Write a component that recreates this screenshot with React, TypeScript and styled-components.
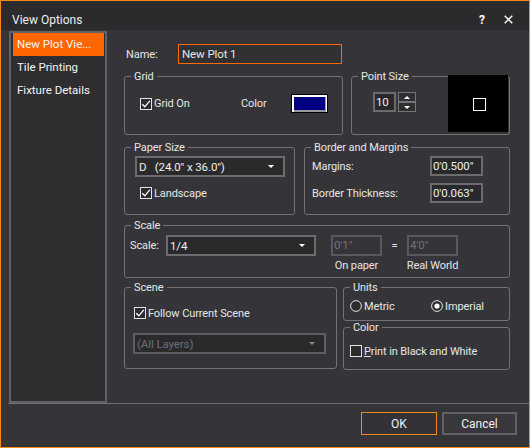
import React from 'react';
import styled, { createGlobalStyle } from 'styled-components';

const FONT = 'Roboto, "Liberation Sans", Arial, sans-serif';

const GlobalStyle = createGlobalStyle`
  html, body {
    margin: 0;
    padding: 0;
    background: #353539;
  }
  body {
    font-family: ${FONT};
    font-size: 11px;
    letter-spacing: -0.1px;
    color: #e6e6e6;
  }
  * {
    box-sizing: border-box;
  }
`;

const Dialog = styled.div`
  width: 530px;
  height: 448px;
  border: 1px solid #f7861c;
  background: #353539;
  display: flex;
  flex-direction: column;
`;

const TitleBar = styled.div`
  height: 29px;
  flex: none;
  background: #2b2b2e;
  display: flex;
  align-items: center;
  padding: 8px 16px 0 11px;
  font-size: 12px;
  letter-spacing: 0;
  color: #eeeeee;
`;

const TitleText = styled.div`
  flex: 1;
`;

const TitleButtons = styled.div`
  display: flex;
  align-items: center;
  gap: 19px;
`;

const HelpMark = styled.span`
  font-weight: bold;
  font-size: 12px;
  color: #ffffff;
`;

const Main = styled.div`
  height: 373px;
  flex: none;
  display: flex;
`;

const Sidebar = styled.div`
  width: 98px;
  height: 372px;
  margin: 1px 0 0 8px;
  flex: none;
  border: 2px solid #626265;
  background: #2e2e31;
  padding: 0 1px 0 2px;
`;

const NavItem = styled.div<{ $active?: boolean }>`
  height: 23px;
  line-height: 22px;
  padding-left: 4px;
  font-size: 11.5px;
  letter-spacing: 0;
  color: #f4f4f4;
  background: ${(p) => (p.$active ? '#ff6600' : 'transparent')};
  white-space: nowrap;
`;

const Content = styled.div`
  flex: 1;
  padding: 14px 0 0 17px;
  display: flex;
  flex-direction: column;
`;

const NameRow = styled.div`
  display: flex;
  align-items: center;
  height: 20px;
  padding-left: 2px;
`;

const NameLabel = styled.span`
  width: 52px;
`;

const NameInput = styled.div`
  width: 164px;
  height: 20px;
  border: 1px solid #ff6a00;
  background: #313134;
  padding-left: 3px;
  line-height: 18px;
  font-size: 11.5px;
`;

const Row = styled.div<{ $mt: number; $gap: number }>`
  display: flex;
  align-items: flex-start;
  margin-top: ${(p) => p.$mt}px;
  gap: ${(p) => p.$gap}px;
`;

const Stack = styled.div<{ $gap: number }>`
  display: flex;
  flex-direction: column;
  gap: ${(p) => p.$gap}px;
`;

const Group = styled.div<{ $w: number; $h: number; $pad: string; $dir?: string }>`
  position: relative;
  flex: none;
  width: ${(p) => p.$w}px;
  height: ${(p) => p.$h}px;
  border: 1px solid #737376;
  border-radius: 3px;
  padding: ${(p) => p.$pad};
  display: flex;
  flex-direction: ${(p) => p.$dir || 'column'};
  align-items: flex-start;
`;

const Legend = styled.span`
  position: absolute;
  top: -7px;
  left: 6px;
  padding: 0 3px;
  line-height: 13px;
  background: #353539;
  color: #e6e6e6;
  white-space: nowrap;
`;

const FlexLine = styled.div<{ $h: number }>`
  display: flex;
  align-items: center;
  height: ${(p) => p.$h}px;
`;

const FixedLabel = styled.span<{ $w: number; $lh?: number }>`
  width: ${(p) => p.$w}px;
  flex: none;
  white-space: nowrap;
  line-height: ${(p) => (p.$lh ? `${p.$lh}px` : 'normal')};
`;

const CheckRow = styled.label<{ $w?: number; $ml?: number; $mt?: number }>`
  display: flex;
  align-items: center;
  gap: 2px;
  height: 14px;
  flex: none;
  width: ${(p) => (p.$w ? `${p.$w}px` : 'auto')};
  margin-left: ${(p) => p.$ml || 0}px;
  margin-top: ${(p) => p.$mt || 0}px;
  white-space: nowrap;
`;

const CheckBox = styled.span`
  width: 12px;
  height: 12px;
  border: 1px solid #e4e4e4;
  background: #2c2c2f;
  display: flex;
  align-items: center;
  justify-content: center;
`;

const RadioDot = styled.span`
  width: 12px;
  height: 12px;
  display: flex;
`;

const Swatch = styled.div`
  width: 37px;
  height: 19px;
  border: 1px solid #000;
  background: #ffffff;
  padding: 2px 1px 0 2px;
`;

const SwatchFill = styled.div`
  width: 100%;
  height: 100%;
  background: #000080;
  border-bottom: 2px solid #9b9b9b;
  border-right: 1px solid #9b9b9b;
`;

const SpinWrap = styled.div`
  display: flex;
  gap: 2px;
  margin: 15px 0 0 21px;
`;

const TextBox = styled.div<{ $w: number; $h: number; $disabled?: boolean }>`
  width: ${(p) => p.$w}px;
  height: ${(p) => p.$h}px;
  flex: none;
  border: 2px solid ${(p) => (p.$disabled ? '#59595c' : '#6c6c6f')};
  background: ${(p) => (p.$disabled ? '#353539' : '#29292b')};
  color: ${(p) => (p.$disabled ? '#737376' : '#eeeeee')};
  padding-left: 1px;
  line-height: ${(p) => p.$h - 4}px;
  font-size: 11.5px;
  white-space: nowrap;
  overflow: hidden;
`;

const SpinButtons = styled.div`
  width: 18px;
  height: 20px;
  display: flex;
  flex-direction: column;
`;

const SpinHalf = styled.div`
  flex: 1;
  border: 1px solid #76767a;
  background: #2f2f32;
  display: flex;
  align-items: center;
  justify-content: center;
`;

const Triangle = styled.span<{ $up?: boolean }>`
  width: 0;
  height: 0;
  border-left: 3px solid transparent;
  border-right: 3px solid transparent;
  ${(p) => (p.$up ? 'border-bottom: 3px solid #ffffff;' : 'border-top: 3px solid #ffffff;')}
`;

const Preview = styled.div`
  width: 60px;
  height: 57px;
  margin: -2px 1px 0 auto;
  background: #000000;
  display: flex;
  align-items: center;
  justify-content: center;
`;

const PreviewDot = styled.div`
  width: 13px;
  height: 13px;
  border: 1px solid #ffffff;
  margin: 2px 0 0 3px;
`;

const Select = styled.div<{ $w: number; $disabled?: boolean; $ml?: number; $mt?: number }>`
  width: ${(p) => p.$w}px;
  height: 21px;
  flex: none;
  margin-left: ${(p) => p.$ml || 0}px;
  margin-top: ${(p) => p.$mt || 0}px;
  border: 2px solid ${(p) => (p.$disabled ? '#5e5e61' : '#6c6c6f')};
  background: #2a2a2c;
  color: ${(p) => (p.$disabled ? '#6f6f72' : '#eeeeee')};
  display: flex;
  align-items: center;
  justify-content: space-between;
  padding: 0 9px 0 2px;
  font-size: 11.5px;
  white-space: pre;
`;

const Arrow = styled.span<{ $disabled?: boolean }>`
  width: 0;
  height: 0;
  border-left: 3px solid transparent;
  border-right: 3px solid transparent;
  border-top: 3px solid ${(p) => (p.$disabled ? '#8a8a8d' : '#ffffff')};
`;

const ScaleCol = styled.div<{ $ml: number }>`
  display: flex;
  flex-direction: column;
  margin-left: ${(p) => p.$ml}px;
`;

const Caption = styled.div`
  margin-top: 3px;
  line-height: 14px;
  white-space: nowrap;
  width: 51px;
  display: flex;
  justify-content: center;
`;

const Equals = styled.span`
  width: 25px;
  text-align: center;
  line-height: 21px;
`;

const Separator = styled.div`
  height: 1px;
  flex: none;
  margin-left: 7px;
  background: #707073;
`;

const Footer = styled.div`
  flex: 1;
  display: flex;
  justify-content: flex-end;
  gap: 5px;
  padding: 8px 12px 0 0;
`;

const Button = styled.button<{ $primary?: boolean; $w: number }>`
  width: ${(p) => p.$w}px;
  height: 23px;
  border: ${(p) => (p.$primary ? '1px solid #f08a1a' : '2px solid #626265')};
  background: ${(p) => (p.$primary ? '#333337' : '#38383c')};
  color: #eeeeee;
  font-family: ${FONT};
  font-size: 12px;
  padding: 0;
`;

const Check = () => (
  <svg width="10" height="10" viewBox="0 0 10 10">
    <path d="M1.3 5.2 L3.8 7.8 L8.8 1.8" fill="none" stroke="#ffffff" strokeWidth="1.3" />
  </svg>
);

const CheckItem: React.FC<{ checked?: boolean; w?: number; ml?: number; mt?: number; children: React.ReactNode }> = ({
  checked,
  w,
  ml,
  mt,
  children,
}) => (
  <CheckRow $w={w} $ml={ml} $mt={mt}>
    <CheckBox>{checked && <Check />}</CheckBox>
    <span>{children}</span>
  </CheckRow>
);

const RadioItem: React.FC<{ checked?: boolean; w?: number; children: React.ReactNode }> = ({ checked, w, children }) => (
  <CheckRow $w={w}>
    <RadioDot>
      <svg width="12" height="12" viewBox="0 0 12 12">
        <circle cx="6" cy="6" r="5.4" fill="#2c2c2f" stroke="#e4e4e4" strokeWidth="1" />
        {checked && <circle cx="6" cy="6" r="2.6" fill="#ffffff" />}
      </svg>
    </RadioDot>
    <span>{children}</span>
  </CheckRow>
);

export default function App() {
  return (
    <>
      <GlobalStyle />
      <Dialog>
        <TitleBar>
          <TitleText>View Options</TitleText>
          <TitleButtons>
            <HelpMark>?</HelpMark>
            <svg width="9" height="9" viewBox="0 0 9 9">
              <path d="M0.7 0.7 L8.3 8.3 M8.3 0.7 L0.7 8.3" stroke="#ffffff" strokeWidth="1.4" />
            </svg>
          </TitleButtons>
        </TitleBar>

        <Main>
          <Sidebar>
            <NavItem $active>New Plot Vie...</NavItem>
            <NavItem>Tile Printing</NavItem>
            <NavItem>Fixture Details</NavItem>
          </Sidebar>

          <Content>
            <NameRow>
              <NameLabel>Name:</NameLabel>
              <NameInput>New Plot 1</NameInput>
            </NameRow>

            <Row $mt={12} $gap={8}>
              <Group $w={219} $h={59} $pad="17px 0 0 15px">
                <Legend>Grid</Legend>
                <FlexLine $h={19}>
                  <CheckItem checked w={101}>
                    Grid On
                  </CheckItem>
                  <FixedLabel $w={50}>Color</FixedLabel>
                  <Swatch>
                    <SwatchFill />
                  </Swatch>
                </FlexLine>
              </Group>
              <Group $w={159} $h={59} $pad="0" $dir="row">
                <Legend>Point Size</Legend>
                <SpinWrap>
                  <TextBox $w={23} $h={20}>10</TextBox>
                  <SpinButtons>
                    <SpinHalf>
                      <Triangle $up />
                    </SpinHalf>
                    <SpinHalf>
                      <Triangle />
                    </SpinHalf>
                  </SpinButtons>
                </SpinWrap>
                <Preview>
                  <PreviewDot />
                </Preview>
              </Group>
            </Row>

            <Row $mt={12} $gap={9}>
              <Group $w={171} $h={68} $pad="8px 0 0 10px">
                <Legend>Paper Size</Legend>
                <Select $w={150}>
                  <span>D   (24.0" x 36.0")</span>
                  <Arrow />
                </Select>
                <CheckItem checked ml={5} mt={9}>
                  Landscape
                </CheckItem>
              </Group>
              <Group $w={206} $h={68} $pad="8px 0 0 7px">
                <Legend>Border and Margins</Legend>
                <Stack $gap={7}>
                  <FlexLine $h={20}>
                    <FixedLabel $w={118}>Margins:</FixedLabel>
                    <TextBox $w={53} $h={20}>0'0.500"</TextBox>
                  </FlexLine>
                  <FlexLine $h={20}>
                    <FixedLabel $w={118}>Border Thickness:</FixedLabel>
                    <TextBox $w={53} $h={20}>0'0.063"</TextBox>
                  </FlexLine>
                </Stack>
              </Group>
            </Row>

            <Row $mt={10} $gap={0}>
              <Group $w={386} $h={53} $pad="9px 0 0 5px" $dir="row">
                <Legend>Scale</Legend>
                <FixedLabel $w={36} $lh={21}>
                  Scale:
                </FixedLabel>
                <Select $w={150}>
                  <span>1/4</span>
                  <Arrow />
                </Select>
                <ScaleCol $ml={15}>
                  <TextBox $w={51} $h={21} $disabled>
                    0'1"
                  </TextBox>
                  <Caption>On paper</Caption>
                </ScaleCol>
                <Equals>=</Equals>
                <ScaleCol $ml={0}>
                  <TextBox $w={51} $h={21} $disabled>
                    4'0"
                  </TextBox>
                  <Caption>Real World</Caption>
                </ScaleCol>
              </Group>
            </Row>

            <Row $mt={9} $gap={6}>
              <Group $w={213} $h={82} $pad="18px 0 0 9px">
                <Legend>Scene</Legend>
                <CheckItem checked>Follow Current Scene</CheckItem>
                <Select $w={193} $ml={-1} $mt={13} $disabled>
                  <span>(All Layers)</span>
                  <Arrow $disabled />
                </Select>
              </Group>
              <Stack $gap={6}>
                <Group $w={167} $h={34} $pad="11px 0 0 6px" $dir="row">
                  <Legend>Units</Legend>
                  <RadioItem w={81}>Metric</RadioItem>
                  <RadioItem checked>Imperial</RadioItem>
                </Group>
                <Group $w={167} $h={43} $pad="16px 0 0 6px">
                  <Legend>Color</Legend>
                  <CheckItem>
                    <u>P</u>rint in Black and White
                  </CheckItem>
                </Group>
              </Stack>
            </Row>
          </Content>
        </Main>

        <Separator />

        <Footer>
          <Button $primary $w={76}>
            OK
          </Button>
          <Button $w={75}>Cancel</Button>
        </Footer>
      </Dialog>
    </>
  );
}
